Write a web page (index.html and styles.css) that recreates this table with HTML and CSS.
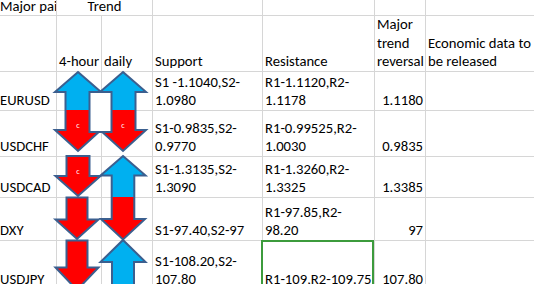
FILE: index.html
```html
<!DOCTYPE html>
<html>
<head>
<meta charset="utf-8">
<link rel="stylesheet" href="styles.css">
</head>
<body>
<div class="page">
  <div class="sheet">
    <div class="cell top first">Major pairs</div>
    <div class="cell top span2 center">Trend</div>
    <div class="cell top"></div>
    <div class="cell top"></div>
    <div class="cell top"></div>
    <div class="cell top"></div>

    <div class="cell first"></div>
    <div class="cell">4-hour</div>
    <div class="cell">daily</div>
    <div class="cell">Support</div>
    <div class="cell">Resistance</div>
    <div class="cell"><span>Major</span><span>trend</span><span>reversal</span></div>
    <div class="cell"><span>Economic data to</span><span>be released</span></div>

    <div class="cell first">EURUSD</div>
    <div class="cell"></div>
    <div class="cell"></div>
    <div class="cell"><span>S1 -1.1040,S2-</span><span>1.0980</span></div>
    <div class="cell"><span>R1-1.1120,R2-</span><span>1.1178</span></div>
    <div class="cell num">1.1180</div>
    <div class="cell"></div>

    <div class="cell first">USDCHF</div>
    <div class="cell"></div>
    <div class="cell"></div>
    <div class="cell"><span>S1-0.9835,S2-</span><span>0.9770</span></div>
    <div class="cell"><span>R1-0.99525,R2-</span><span>1.0030</span></div>
    <div class="cell num">0.9835</div>
    <div class="cell"></div>

    <div class="cell first">USDCAD</div>
    <div class="cell"></div>
    <div class="cell"></div>
    <div class="cell"><span>S1-1.3135,S2-</span><span>1.3090</span></div>
    <div class="cell"><span>R1-1.3260,R2-</span><span>1.3325</span></div>
    <div class="cell num">1.3385</div>
    <div class="cell"></div>

    <div class="cell first">DXY</div>
    <div class="cell"></div>
    <div class="cell"></div>
    <div class="cell">S1-97.40,S2-97</div>
    <div class="cell"><span>R1-97.85,R2-</span><span>98.20</span></div>
    <div class="cell num">97</div>
    <div class="cell"></div>

    <div class="cell first">USDJPY</div>
    <div class="cell"></div>
    <div class="cell"></div>
    <div class="cell"><span>S1-108.20,S2-</span><span>107.80</span></div>
    <div class="cell selected">R1-109,R2-109.75</div>
    <div class="cell num">107.80</div>
    <div class="cell"></div>
  </div>

  <svg class="shapes" width="534" height="284" viewBox="0 0 534 284">
    <!-- EURUSD / USDCHF 4-hour -->
    <polygon class="up" points="78,72 101,92 90.5,92 90.5,110 65.5,110 65.5,92 55,92"/>
    <polygon class="down" points="65.5,110 90.5,110 90.5,130 101,130 78,151 55,130 65.5,130"/>
    <polygon class="line" points="78,72 101,92 90.5,92 90.5,130 101,130 78,151 55,130 65.5,130 65.5,92 55,92"/>
    <!-- EURUSD / USDCHF daily -->
    <polygon class="up" points="123,72 146,92 135.5,92 135.5,110 110.5,110 110.5,92 100,92"/>
    <polygon class="down" points="110.5,110 135.5,110 135.5,130 146,130 123,151 100,130 110.5,130"/>
    <polygon class="line" points="123,72 146,92 135.5,92 135.5,130 146,130 123,151 100,130 110.5,130 110.5,92 100,92"/>
    <rect class="box" x="89.5" y="92" width="22" height="40"/>
    <text class="tag" x="78" y="128">c</text>
    <text class="tag" x="123" y="128">c</text>

    <!-- USDCAD 4-hour -->
    <polygon class="down line" points="66.5,156 89.5,156 89.5,176 100.5,176 78,196 55.5,176 66.5,176"/>
    <text class="tag" x="78" y="174">c</text>
    <!-- USDCAD daily up / DXY daily down -->
    <polygon class="up" points="123,156 145.5,175.5 134.3,175.5 134.3,197 111.7,197 111.7,175.5 100.5,175.5"/>
    <polygon class="down" points="111.7,197 134.3,197 134.3,219 145,219 123,239.5 101,219 111.7,219"/>
    <polygon class="line" points="123,156 145.5,175.5 134.3,175.5 134.3,219 145,219 123,239.5 101,219 111.7,219 111.7,175.5 100.5,175.5"/>
    <!-- DXY 4-hour -->
    <polygon class="down line" points="66.5,197.5 87.5,197.5 87.5,219.5 98.5,219.5 77,239 55.5,219.5 66.5,219.5"/>
    <!-- USDJPY -->
    <polygon class="down line" points="66.5,240.5 87.5,240.5 87.5,267.5 98.5,267.5 77,290 55.5,267.5 66.5,267.5"/>
    <polygon class="up line" points="123,240 145.5,262 134,262 134,300 112,300 112,262 100.5,262"/>
  </svg>
</div>
</body>
</html>
```

FILE: styles.css
```css
html, body {
  margin: 0;
  padding: 0;
  background: #ffffff;
}

body {
  width: 534px;
  height: 284px;
  overflow: hidden;
  font-family: Carlito, Calibri, Lato, "Liberation Sans", sans-serif;
  font-size: 14.67px;
  color: #000000;
}

.page {
  position: relative;
  width: 534px;
  height: 284px;
  overflow: hidden;
}

.sheet {
  display: grid;
  grid-template-columns: 57px 45px 51px 110px 112px 51px 130px;
  grid-template-rows: 16px 56px 39px 46px 41px 43px 49px;
}

.cell {
  box-sizing: border-box;
  border-right: 1px solid #d6d6d6;
  border-bottom: 1px solid #d6d6d6;
  padding: 0 2px;
  display: flex;
  flex-direction: column;
  justify-content: flex-end;
  align-items: flex-start;
  line-height: 18.7px;
  white-space: nowrap;
  overflow: hidden;
}

.first {
  padding-left: 0;
}

.top {
  line-height: 12px;
  padding-bottom: 3px;
}

.span2 {
  grid-column: span 2;
}

.center {
  align-items: center;
}

.num {
  align-items: flex-end;
}

.selected {
  position: relative;
  overflow: visible;
}

.selected::after {
  content: "";
  position: absolute;
  left: -2px;
  top: -1px;
  right: 0;
  bottom: -1px;
  border: 2px solid #3c9b3c;
}

.shapes {
  position: absolute;
  left: 0;
  top: 0;
  pointer-events: none;
}

.up {
  fill: #00b0f0;
}

.down {
  fill: #ff0000;
}

.line {
  stroke: #3b5f8f;
  stroke-width: 2;
  stroke-linejoin: miter;
}

polygon.line:not(.up):not(.down) {
  fill: none;
}

.box {
  fill: #ffffff;
  stroke: #3b5f8f;
  stroke-width: 2;
}

.tag {
  fill: #ffffff;
  font-family: Carlito, Lato, "Liberation Sans", sans-serif;
  font-size: 8px;
  text-anchor: middle;
}
```
